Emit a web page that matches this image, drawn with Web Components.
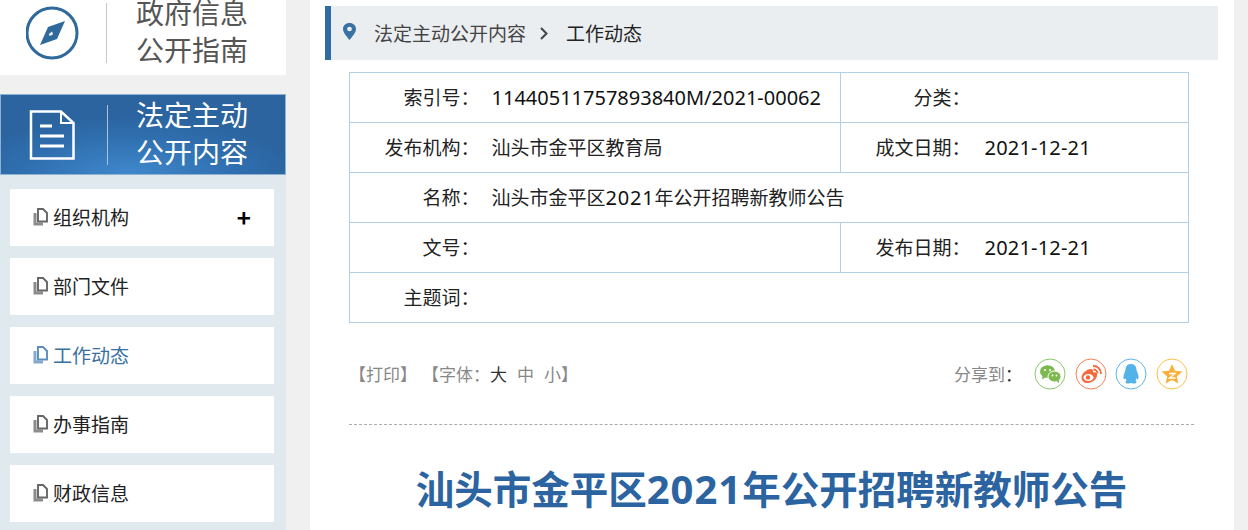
<!DOCTYPE html>
<html lang="zh">
<head>
<meta charset="utf-8">
<title>汕头市金平区2021年公开招聘新教师公告</title>
<style>
  html, body { margin: 0; height: 530px; overflow: hidden; background: #f0f0f0; }
  body { font-family: "Noto Sans CJK SC", "Noto Sans", sans-serif; }
  .page { display: flex; align-items: flex-start; gap: 24px; height: 530px; overflow: hidden; }
</style>
</head>
<body>
<div class="page">
  <side-nav>
    <nav-item>组织机构<span slot="extra">+</span></nav-item>
    <nav-item>部门文件</nav-item>
    <nav-item active>工作动态</nav-item>
    <nav-item>办事指南</nav-item>
    <nav-item>财政信息</nav-item>
  </side-nav>
  <main-panel>
    <bread-bar></bread-bar>
    <info-table></info-table>
    <tool-bar></tool-bar>
    <article-title>汕头市金平区<span>2021</span>年公开招聘新教师公告</article-title>
  </main-panel>
</div>

<script>
class SideNav extends HTMLElement {
  connectedCallback() {
    this.attachShadow({ mode: 'open' });
    this.shadowRoot.innerHTML = `
      <style>
        :host { display: block; width: 286px; flex: none; }
        .head {
          display: grid;
          grid-template-columns: 106px 1px 1fr;
          align-items: center;
          font-size: 28px;
          line-height: 37px;
        }
        .head .line { height: 60px; background: #c8c8c8; }
        .head .ico { display: flex; justify-content: center; }
        .head .txt { padding: 0 0 4px 29px; }
        .guide { height: 84px; margin-top: -9px; background: #fff; color: #555; }
        .open {
          box-sizing: border-box;
          height: 81px;
          margin-top: 19px;
          color: #fff;
          border: 1px solid #8fb2d3;
          background: radial-gradient(ellipse 60% 75% at 45% 100%, #3f88cc 0%, #2f6eae 65%, #2b649f 100%);
        }
        .open .line { background: #a9c4de; }
        .open .txt { padding-left: 28px; }
        .open .ico { padding-right: 4px; }
        .list {
          display: flex;
          flex-direction: column;
          gap: 12px;
          padding: 14px 12px 14px 10px;
          background: #e0e9ed;
        }
      </style>
      <div class="head guide">
        <div class="ico">
          <svg width="54" height="54" viewBox="0 0 54 54">
            <circle cx="26" cy="27" r="25" fill="none" stroke="#30699c" stroke-width="3"/>
            <path fill-rule="evenodd" fill="#30699c" d="M39 15 L22 21 L14 39 L31 33 Z M26 25.500 L23 28 L23.500 30 L27 28.500 Z"/>
          </svg>
        </div>
        <div class="line"></div>
        <div class="txt">政府信息<br>公开指南</div>
      </div>
      <div class="head open">
        <div class="ico">
          <svg width="46" height="50" viewBox="0 0 46 50" fill="none" stroke="#fff" stroke-width="2.500">
            <path d="M2 1.500 H32 L44.500 13 V48.500 H2 Z"/>
            <path d="M32 1.500 V13 H44.500" stroke-width="2"/>
            <path d="M11 16 H23 M11 26 H35 M11 36 H35" stroke-width="3"/>
          </svg>
        </div>
        <div class="line"></div>
        <div class="txt">法定主动<br>公开内容</div>
      </div>
      <div class="list"><slot></slot></div>
    `;
  }
}
customElements.define('side-nav', SideNav);

class NavItem extends HTMLElement {
  connectedCallback() {
    this.attachShadow({ mode: 'open' });
    this.shadowRoot.innerHTML = `
      <style>
        :host {
          display: flex;
          align-items: center;
          box-sizing: border-box;
          height: 57px;
          padding: 0 23px 2px 23px;
          background: #fff;
          color: #222;
          font-size: 19px;
        }
        :host([active]) { color: #3a6f9f; }
        svg { flex: none; margin-right: 5px; margin-top: 1px; color: #666; }
        :host([active]) svg { color: #5a8dbb; }
        .name { flex: 1; }
        ::slotted([slot="extra"]) { font-size: 24px; font-weight: 700; color: #000; line-height: 1; }
      </style>
      <svg width="15" height="18" viewBox="0 0 15 18">
        <path d="M0.500 5 H3.500 V14.500 H10 V17.500 H0.500 Z" fill="currentColor" opacity=".75"/>
        <path d="M5 1 H10 L14 5 V13.500 H5 Z" fill="none" stroke="currentColor" stroke-width="1.900"/>
      </svg>
      <span class="name"><slot></slot></span>
      <slot name="extra"></slot>
    `;
  }
}
customElements.define('nav-item', NavItem);

class MainPanel extends HTMLElement {
  connectedCallback() {
    this.attachShadow({ mode: 'open' });
    this.shadowRoot.innerHTML = `
      <style>
        :host {
          display: block;
          box-sizing: border-box;
          width: 924px;
          height: 530px;
          flex: none;
          padding: 6px 16px 0 15px;
          background: #fff;
        }
      </style>
      <slot></slot>
    `;
  }
}
customElements.define('main-panel', MainPanel);

class BreadBar extends HTMLElement {
  connectedCallback() {
    this.attachShadow({ mode: 'open' });
    this.shadowRoot.innerHTML = `
      <style>
        :host {
          display: flex;
          align-items: center;
          height: 54px;
          padding: 0 0 2px 12px;
          box-sizing: border-box;
          border-left: 6px solid #2e6da4;
          background: #ebeef1;
          color: #444;
          font-size: 19px;
        }
        svg.pin { margin-right: 18px; margin-top: -2px; }
        svg.gt { margin: 2px 18px 0 14px; }
        .cur { color: #222; }
      </style>
      <svg class="pin" width="13" height="17" viewBox="0 0 13 18" preserveAspectRatio="none">
        <path fill-rule="evenodd" fill="#3a71a3" d="M6.500 0 C10.200 0 13 2.800 13 6.300 C13 10.500 8.500 15 6.500 18 C4.500 15 0 10.500 0 6.300 C0 2.800 2.800 0 6.500 0 Z M6.500 4 A2.400 2.400 0 1 0 6.500 8.800 A2.400 2.400 0 1 0 6.500 4 Z"/>
      </svg>
      <span>法定主动公开内容</span>
      <svg class="gt" width="8" height="13" viewBox="0 0 8 13"><path d="M1 1 L6.500 6.500 L1 12" fill="none" stroke="#444" stroke-width="2"/></svg>
      <span class="cur">工作动态</span>
    `;
  }
}
customElements.define('bread-bar', BreadBar);

class InfoTable extends HTMLElement {
  connectedCallback() {
    this.attachShadow({ mode: 'open' });
    this.shadowRoot.innerHTML = `
      <style>
        :host { display: block; margin: 12px 0 0 24px; width: 840px; }
        table {
          width: 840px;
          table-layout: fixed;
          border-collapse: collapse;
          font-size: 19px;
          color: #222;
        }
        td {
          height: 50px;
          box-sizing: border-box;
          padding: 0 0 2px;
          border: 1px solid #b3cfe5;
          white-space: nowrap;
        }
        .k { text-align: right; padding-right: 2px; border-right: 0; }
        .v { padding-left: 10px; border-left: 0; }
        .v2 { padding-left: 12px; }
        .n { font-family: "Noto Sans", sans-serif; font-size: 20px; color: #111; }
        .d { letter-spacing: .2px; }
        .y { letter-spacing: .8px; }
      </style>
      <table>
        <colgroup><col style="width:132px"><col style="width:359px"><col style="width:132px"><col></colgroup>
        <tr><td class="k">索引号：</td><td class="v"><span class="n">11440511757893840M/2021-00062</span></td><td class="k">分类：</td><td class="v v2"></td></tr>
        <tr><td class="k">发布机构：</td><td class="v">汕头市金平区教育局</td><td class="k">成文日期：</td><td class="v v2"><span class="n d">2021-12-21</span></td></tr>
        <tr><td class="k">名称：</td><td class="v" colspan="3">汕头市金平区<span class="n y">2021</span>年公开招聘新教师公告</td></tr>
        <tr><td class="k">文号：</td><td class="v"></td><td class="k">发布日期：</td><td class="v v2"><span class="n d">2021-12-21</span></td></tr>
        <tr><td class="k">主题词：</td><td class="v" colspan="3"></td></tr>
      </table>
    `;
  }
}
customElements.define('info-table', InfoTable);

class ToolBar extends HTMLElement {
  connectedCallback() {
    this.attachShadow({ mode: 'open' });
    this.shadowRoot.innerHTML = `
      <style>
        :host {
          display: flex;
          align-items: center;
          justify-content: space-between;
          box-sizing: border-box;
          height: 102px;
          margin-left: 24px;
          width: 845px;
          border-bottom: 1px dashed #aaa;
          padding: 0 6px 0 0;
          font-size: 17px;
          color: #888;
        }
        .left { display: flex; align-items: center; }
        .font { margin-left: 5px; }
        .big { color: #333; margin-right: 10px; }
        .mid { margin-right: 10px; }
        .share { display: flex; align-items: center; }
        .share > span { margin-right: 12px; }
        .icons { display: flex; gap: 8.700px; }
        .colon { color: #333; }
        svg { display: block; }
      </style>
      <div class="left">
        <span>【打印】</span><span class="font">【字体：</span><span class="big">大</span><span class="mid">中</span><span>小】</span>
      </div>
      <div class="share">
        <span>分享到<span class="colon">：</span></span>
        <div class="icons">
          <svg width="32" height="32" viewBox="0 0 32 32">
            <circle cx="16" cy="16" r="15" fill="#fff" stroke="#8cc866"/>
            <ellipse cx="13.500" cy="13.500" rx="7.500" ry="6.300" fill="#7cba4f"/>
            <path d="M8.500 18 L8 21.500 L12 19 Z" fill="#7cba4f"/>
            <ellipse cx="20.500" cy="18.500" rx="6.500" ry="5.500" fill="#7cba4f" stroke="#fff"/>
            <path d="M23 23 L25 25.500 L25 21 Z" fill="#7cba4f"/>
            <circle cx="11" cy="12" r="1" fill="#fff"/><circle cx="16" cy="12" r="1" fill="#fff"/>
            <circle cx="18.500" cy="17.500" r=".9" fill="#fff"/><circle cx="22.500" cy="17.500" r=".9" fill="#fff"/>
          </svg>
          <svg width="32" height="32" viewBox="0 0 32 32">
            <circle cx="16" cy="16" r="15" fill="#fff" stroke="#f77f55"/>
            <path d="M6.500 19.500 C6.500 15.500 12 11 15.500 11 C18 11 18.500 13 18 14.500 C21 13.800 23 15 22 18 C21 22.500 16 25 12.500 25 C9 25 6.500 23 6.500 19.500 Z" fill="#f26a3d"/>
            <ellipse cx="13.500" cy="19.500" rx="5" ry="3.500" fill="#fff"/>
            <circle cx="13" cy="19.500" r="2.200" fill="#f26a3d"/>
            <path d="M18 8 A7.500 7.500 0 0 1 26 16 M18.500 11.500 A4 4 0 0 1 22.500 15.500" fill="none" stroke="#f26a3d" stroke-width="1.800"/>
          </svg>
          <svg width="32" height="32" viewBox="0 0 32 32">
            <circle cx="16" cy="16" r="15" fill="#fff" stroke="#5fb4e8"/>
            <path fill="#53b2e8" d="M16 6 C20 6 21.500 9 21.500 12 C22 14 24 17 23.500 20.500 C23 22 22 21 21.500 20 C21.200 21.500 21 22 20.500 23 C22 23.500 22 25.500 19 25.500 C17.500 25.500 16.500 25 16 25 C15.500 25 14.500 25.500 13 25.500 C10 25.500 10 23.500 11.500 23 C11 22 10.800 21.500 10.500 20 C10 21 9 22 8.500 20.500 C8 17 10 14 10.500 12 C10.500 9 12 6 16 6 Z"/>
          </svg>
          <svg width="32" height="32" viewBox="0 0 32 32">
            <circle cx="16" cy="16" r="15" fill="#fff" stroke="#fcc14f"/>
            <path fill="#fbb03b" d="M16 6 L19 12.800 L26.500 13.500 L20.800 18.500 L22.500 25.500 L16 22 L9.500 25.500 L11.200 18.500 L5.500 13.500 L13 12.800 Z"/>
            <path d="M13 15.500 H19 L13.500 20 H19.500" fill="none" stroke="#fff" stroke-width="1.300"/>
          </svg>
        </div>
      </div>
    `;
  }
}
customElements.define('tool-bar', ToolBar);

class ArticleTitle extends HTMLElement {
  connectedCallback() {
    this.attachShadow({ mode: 'open' });
    this.shadowRoot.innerHTML = `
      <style>
        :host {
          display: block;
          margin-top: 33px;
          text-align: center;
          font-size: 38.500px;
          line-height: 58px;
          font-weight: 700;
          color: #2b64a0;
          white-space: nowrap;
        }
        ::slotted(span) { font-family: "Noto Sans", sans-serif; font-size: 40px; letter-spacing: 1px; }
      </style>
      <slot></slot>
    `;
  }
}
customElements.define('article-title', ArticleTitle);
</script>
</body>
</html>
